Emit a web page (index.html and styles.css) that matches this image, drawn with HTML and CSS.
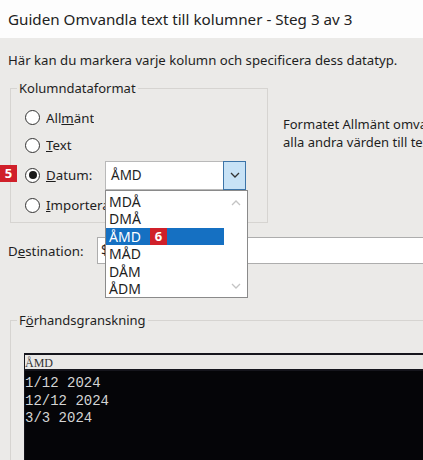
FILE: index.html
```html
<!DOCTYPE html>
<html lang="sv">
<head>
<meta charset="utf-8">
<title>Guiden Omvandla text till kolumner</title>
<link rel="stylesheet" href="styles.css">
</head>
<body>
<div class="window">
  <div class="titlebar">Guiden Omvandla text till kolumner - Steg 3 av 3</div>
  <div class="content">
    <p class="intro">Här kan du markera varje kolumn och specificera dess datatyp.</p>
    <div class="format-row">
      <fieldset class="group format-group">
        <legend>Kolumndataformat</legend>
        <div class="radio-row r1"><span class="radio"></span><span class="lbl">All<u>m</u>änt</span></div>
        <div class="radio-row r2"><span class="radio"></span><span class="lbl"><u>T</u>ext</span></div>
        <div class="radio-row r3">
          <span class="badge badge5">5</span>
          <span class="radio checked"></span><span class="lbl datum-lbl"><u>D</u>atum:</span>
          <div class="combo">
            <span class="combo-value">ÅMD</span>
            <span class="combo-btn"><svg width="10" height="6" viewBox="0 0 10 6"><polyline points="1,1 5,5 9,1" fill="none" stroke="#333" stroke-width="1.3"/></svg></span>
            <div class="droplist">
              <ul class="items">
                <li>MDÅ</li>
                <li>DMÅ</li>
                <li class="sel">ÅMD <span class="badge badge6">6</span></li>
                <li>MÅD</li>
                <li>DÅM</li>
                <li>ÅDM</li>
              </ul>
              <div class="scroll">
                <svg width="10" height="6" viewBox="0 0 10 6"><polyline points="1,5 5,1 9,5" fill="none" stroke="#c4c4c4" stroke-width="1.3"/></svg>
                <svg width="10" height="6" viewBox="0 0 10 6"><polyline points="1,1 5,5 9,1" fill="none" stroke="#c4c4c4" stroke-width="1.3"/></svg>
              </div>
            </div>
          </div>
        </div>
        <div class="radio-row r4"><span class="radio"></span><span class="lbl"><u>I</u>mportera inte kolumn (hoppa över)</span></div>
      </fieldset>
      <div class="desc">
        <div>Formatet Allmänt omvandlar numeriska värden till tal, datumvärden till datum och</div>
        <div>alla andra värden till text.</div>
      </div>
    </div>
    <div class="dest-row">
      <span class="dest-lbl">D<u>e</u>stination:</span>
      <div class="dest-input">$A$1</div>
    </div>
    <fieldset class="group preview-group">
      <legend>F<u>ö</u>rhandsgranskning</legend>
      <div class="preview">
        <div class="preview-head">ÅMD</div>
        <div class="preview-body">
          <div>1/12 2024</div>
          <div>12/12 2024</div>
          <div>3/3 2024</div>
        </div>
      </div>
    </fieldset>
  </div>
</div>
</body>
</html>
```

FILE: styles.css
```css
* { box-sizing: border-box; }
html, body {
  margin: 0;
  padding: 0;
  width: 423px;
  height: 460px;
  overflow: hidden;
}
body {
  background: #ebeae8;
  font-family: "Noto Sans", "Open Sans", sans-serif;
  color: #1e1e1e;
  font-size: 13px;
}
.window { width: 423px; }
.titlebar {
  height: 38px;
  background: #fdfdfd;
  font-size: 15.2px;
  line-height: 38px;
  padding-left: 8px;
  white-space: nowrap;
  color: #222;
}
.content {
  padding-left: 8px;
  white-space: nowrap;
}
.intro {
  margin: 13px 0 0 0;
  line-height: 18px;
  font-size: 13.2px;
}
.format-row {
  display: flex;
  align-items: flex-start;
  margin-top: 10px;
}
.group {
  margin: 0 0 0 2px;
  border: 1px solid #d6d4d1;
  padding: 0;
  min-width: 0;
}
.group legend {
  padding: 0 2px;
  line-height: 18px;
  font-size: 13px;
}
.format-group {
  width: 258px;
  flex: none;
  padding: 7px 0 3px 14px;
}
.format-group legend { margin-left: -8px; }
.radio-row {
  display: flex;
  align-items: center;
  position: relative;
}
.r1 { height: 27px; }
.r2 { height: 28px; }
.r3 { height: 32px; }
.r4 { height: 28px; }
.radio {
  width: 15px;
  height: 15px;
  border: 1px solid #333;
  border-radius: 50%;
  background: #fff;
  flex: none;
  display: flex;
  align-items: center;
  justify-content: center;
}
.radio.checked::after {
  content: "";
  width: 8px;
  height: 8px;
  border-radius: 50%;
  background: #1a1a1a;
}
.lbl {
  margin-left: 6px;
  font-size: 13.3px;
  overflow: hidden;
}
.r4 .lbl { width: 63px; }
.datum-lbl { width: 59px; flex: none; }
.badge {
  background: #d0202a;
  color: #fff;
  font-weight: bold;
  font-size: 13px;
  width: 17px;
  height: 17px;
  display: inline-flex;
  align-items: center;
  justify-content: center;
  line-height: 1;
}
.badge5 {
  position: absolute;
  left: -25px;
  top: 6px;
}
.combo {
  position: relative;
  width: 141px;
  height: 29px;
  border: 1px solid #b9b9b9;
  background: #fff;
  display: flex;
  align-items: center;
  z-index: 2;
}
.combo-value {
  flex: 1;
  padding-left: 5px;
  font-size: 13.5px;
}
.combo-btn {
  width: 23px;
  height: 29px;
  margin: -1px -1px -1px 0;
  border: 1px solid #3c74a8;
  background: #c7e2f6;
  display: flex;
  align-items: center;
  justify-content: center;
}
.droplist {
  position: absolute;
  top: 28px;
  left: -1px;
  width: 143px;
  height: 108px;
  border: 1px solid #8a8a8a;
  background: #fff;
  display: flex;
}
.items {
  list-style: none;
  margin: 0;
  padding: 2px 0 0 0;
  width: 118px;
}
.items li {
  height: 17.6px;
  line-height: 17.6px;
  padding-left: 3px;
  font-size: 14px;
  display: flex;
  align-items: center;
}
.items li.sel {
  background: #1570c2;
  color: #fff;
}
.badge6 {
  margin-left: 9px;
  height: 17px;
}
.scroll {
  flex: 1;
  display: flex;
  flex-direction: column;
  align-items: center;
  justify-content: space-between;
  padding: 9px 0 8px 0;
}
.desc {
  margin: 36px 0 0 15px;
  line-height: 18px;
  font-size: 13px;
}
.dest-row {
  display: flex;
  align-items: center;
  margin-top: 14px;
  height: 27px;
}
.dest-lbl {
  width: 89px;
  flex: none;
  font-size: 13.3px;
}
.dest-input {
  width: 400px;
  flex: none;
  height: 27px;
  border: 1px solid #adadad;
  background: #fff;
  padding-left: 3px;
  line-height: 25px;
  font-size: 13.5px;
}
.preview-group {
  margin-top: 47px;
  width: 440px;
  padding: 24px 0 0 13px;
  height: 160px;
}
.preview-group legend { margin-left: -7px; }
.preview {
  border-top: 2px solid #15151c;
  border-left: 1px solid #15151c;
}
.preview-head {
  height: 16px;
  background: #e9e8e6;
  font-family: "Liberation Serif", serif;
  font-size: 12px;
  line-height: 16px;
  color: #333;
  border-bottom: 2px solid #15151c;
}
.preview-body {
  background: #050508;
  color: #d4d4d4;
  font-family: "Liberation Mono", monospace;
  font-size: 14px;
  line-height: 17.6px;
  padding-top: 4px;
  height: 120px;
}
```
